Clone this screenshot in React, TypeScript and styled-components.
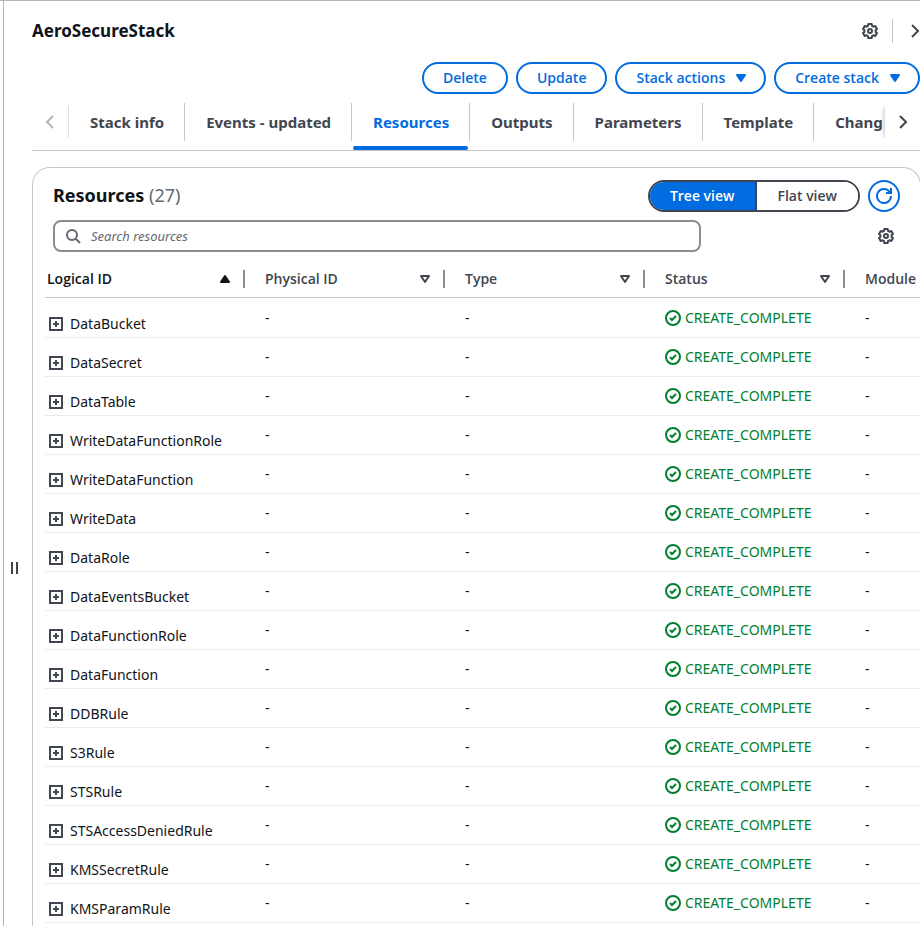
import React, { useState } from 'react';
import styled, { createGlobalStyle, css } from 'styled-components';

const blue = '#006ce0';
const ink = '#0f141a';
const slate = '#424650';
const line = '#c6c6cd';
const green = '#00802f';
const labelFont = '"Open Sans", "Noto Sans", sans-serif';

const GlobalStyle = createGlobalStyle`
  *, *::before, *::after { box-sizing: border-box; }
  body {
    margin: 0;
    background: #fff;
    color: ${ink};
    font: 400 14px/20px "Noto Sans", "Open Sans", sans-serif;
  }
  button, input { font: inherit; color: inherit; }
`;

const Page = styled.div`
  display: flex;
  height: 100vh;
  overflow: hidden;
  border-top: 1px solid #b4b4bb;
`;

const Gutter = styled.div`
  flex: 0 0 29px;
  margin-left: 3px;
  border-left: 1px solid #b4b4bb;
`;

const ResizeHandle = styled.button`
  display: flex;
  justify-content: center;
  align-items: center;
  width: 22px;
  height: 32px;
  margin-top: 551px;
  padding: 0;
  border: 0;
  background: none;
  color: ${slate};
  cursor: col-resize;
`;

const Main = styled.main`
  flex: 1 1 0;
  min-width: 0;
`;

const Icon = styled.svg`
  display: block;
  flex: none;
  width: 16px;
  height: 16px;
  fill: none;
  stroke: currentColor;
  stroke-width: 2;
`;

const IconButton = styled.button`
  display: flex;
  padding: 0;
  border: 0;
  background: none;
  color: ${slate};
  cursor: pointer;

  &:disabled { color: #b4b4bb; cursor: default; }
`;

const SortButton = styled(IconButton)`
  color: inherit;
`;

const TitleBar = styled.header`
  display: flex;
  align-items: center;
  height: 60px;
  margin-right: -3px;
`;

const Title = styled.h1`
  flex: 1;
  margin: 0;
  font-size: 17px;
  line-height: 24px;
  font-weight: 700;
`;

const TitleDivider = styled.span`
  width: 1px;
  height: 24px;
  margin: 0 14px;
  background: ${line};
`;

const Actions = styled.div`
  display: flex;
  justify-content: flex-end;
  gap: 8px;
  padding-top: 1px;
`;

const ActionButton = styled.button`
  display: flex;
  align-items: center;
  gap: 8px;
  height: 32px;
  padding: 0 19px;
  border: 2px solid ${blue};
  border-radius: 16px;
  background: #fff;
  color: ${blue};
  font-family: ${labelFont};
  font-weight: 600;
  cursor: pointer;

  svg { margin-right: -4px; }
`;

const TabBar = styled.div`
  display: flex;
  align-items: center;
  height: 57px;
  border-bottom: 1px solid ${line};
`;

const TabArrow = styled(IconButton)<{ $side: 'left' | 'right' }>`
  align-items: center;
  align-self: flex-start;
  flex: none;
  height: 32px;
  margin-top: 12px;
  ${p => p.$side === 'left'
    ? css`width: 37px; padding-left: 10px; border-right: 1px solid #dedee3;`
    : css`width: 36px; padding-left: 10px; border-left: 1px solid #dedee3; box-shadow: -4px 0 4px -4px rgba(15, 20, 26, 0.3);`}
`;

const TabList = styled.div`
  display: flex;
  flex: 1 1 0;
  height: 56px;
  min-width: 0;
  overflow: hidden;
`;

const Tab = styled.button<{ $active: boolean }>`
  flex: none;
  display: flex;
  flex-direction: column;
  justify-content: space-between;
  padding: 9px 0 0;
  border: 0;
  background: none;
  color: ${p => (p.$active ? blue : slate)};
  font-size: 15px;
  font-weight: 700;
  white-space: nowrap;
  cursor: pointer;

  &::after {
    content: '';
    align-self: stretch;
    height: 4px;
    margin: 0 2px 0 1px;
    border-radius: 2px;
    background: ${p => (p.$active ? blue : 'transparent')};
  }
`;

const TabText = styled.span`
  display: block;
  padding: 9px 20px 9px 21px;
  border-right: 1px solid ${line};
`;

const Card = styled.section`
  margin: 16px -1px 0 0;
  padding: 12px 0 0 12px;
  border: 1px solid ${line};
  border-radius: 18px 18px 0 0;
  border-bottom: 0;
  min-height: 100vh;
`;

const CardHeader = styled.div`
  display: flex;
  align-items: center;
  gap: 8px;
  padding: 0 20px 0 8px;
`;

const CardTitle = styled.h2`
  flex: 1;
  margin: 0;
  padding-bottom: 2px;
  font-size: 18px;
  line-height: 24px;
  font-weight: 700;
`;

const Count = styled.span`
  color: #656871;
  font-weight: 400;
`;

const Segments = styled.div`
  display: flex;
  height: 32px;
  border: 2px solid ${slate};
  border-radius: 16px;
  overflow: hidden;
`;

const Segment = styled.button<{ $on: boolean }>`
  padding: 0 21px 0 20px;
  border: 0;
  background: ${p => (p.$on ? blue : '#fff')};
  color: ${p => (p.$on ? '#fff' : slate)};
  font-family: ${labelFont};
  font-weight: 600;
  cursor: pointer;

  & + & { border-left: 2px solid ${slate}; }
`;

const RefreshButton = styled(IconButton)`
  justify-content: center;
  align-items: center;
  width: 32px;
  height: 32px;
  border: 2px solid ${blue};
  border-radius: 50%;
  color: ${blue};
`;

const Tools = styled.div`
  display: flex;
  align-items: center;
  justify-content: space-between;
  padding: 8px 26px 0 8px;
`;

const SearchBox = styled.label`
  display: flex;
  align-items: center;
  gap: 10px;
  flex: 0 1 648px;
  height: 32px;
  padding: 0 10px;
  border: 2px solid #8c8c94;
  border-radius: 8px;
  color: #656871;
`;

const SearchInput = styled.input`
  flex: 1;
  min-width: 0;
  padding: 0;
  border: 0;
  outline: 0;
  background: none;
  font-size: 13px;
  color: ${ink};

  &::placeholder { color: #656871; font-style: italic; opacity: 1; }
`;

const TableClip = styled.div`
  overflow: hidden;
`;

const Table = styled.table`
  table-layout: fixed;
  width: 1000px;
  border-collapse: separate;
  border-spacing: 0;
`;

const HeadCell = styled.th<{ $sorted: boolean }>`
  width: 200px;
  height: 46px;
  padding: 8px 0 0;
  border-bottom: 1px solid ${line};
  color: ${p => (p.$sorted ? ink : slate)};
  font-family: ${labelFont};
  font-weight: 600;
  text-align: left;
`;

const HeadInner = styled.div<{ $first: boolean }>`
  display: flex;
  align-items: center;
  justify-content: space-between;
  height: 18px;
  padding: 0 10px 0 ${p => (p.$first ? 2 : 20)}px;
  border-right: 2px solid #8c8c94;
`;

const Cell = styled.td`
  height: 39px;
  padding: 10px 0 8px 20px;
  border-bottom: 1px solid #ebebf0;
  vertical-align: top;

  tr:first-child > & { height: 40px; }
  tr:not(:first-child) > & { padding-top: 9px; }
`;

const NameCell = styled(Cell)`
  &&& { padding: 15px 0 3px 4px; }
  tr:first-child > &&& { padding-top: 16px; }
`;

const NameButton = styled.button`
  display: flex;
  align-items: center;
  gap: 7px;
  padding: 0;
  border: 0;
  background: none;
  cursor: pointer;

  svg { width: 14px; height: 14px; }
`;

const Status = styled.span`
  display: flex;
  align-items: center;
  gap: 4px;
  color: ${green};
`;

const ChevronLeft = () => <Icon viewBox="0 0 16 16"><path d="M11 2 5 8l6 6" /></Icon>;
const ChevronRight = () => <Icon viewBox="0 0 16 16"><path d="m5 2 6 6-6 6" /></Icon>;
const CaretDown = () => <Icon viewBox="0 0 16 16"><path d="M4 5h8l-4 6z" fill="currentColor" strokeLinejoin="round" /></Icon>;
const SortUp = () => <Icon viewBox="0 0 16 16"><path d="M4 11h8L8 5z" fill="currentColor" strokeLinejoin="round" /></Icon>;
const SortNone = () => <Icon viewBox="0 0 16 16"><path d="M4 5h8l-4 6z" strokeLinejoin="round" /></Icon>;
const Gear = () => (
  <Icon viewBox="0 0 16 16" strokeLinejoin="round">
    <path d="M13.6 8.9V7.1L15 6l-1.7-3-1.8.7-1.5-.9L9.7 1H6.3L6 2.8l-1.5.9L2.7 3 1 6l1.4 1.1v1.8L1 10l1.7 3 1.8-.7 1.5.9.3 1.8h3.4l.3-1.8 1.5-.9 1.8.7L15 10z" />
    <circle cx="8" cy="8" r="2" />
  </Icon>
);
const Refresh = () => <Icon viewBox="0 0 16 16"><path d="M15 8a7 7 0 1 1-1.8-4.7L15 5M15 0v5h-5" /></Icon>;
const Magnifier = () => <Icon viewBox="0 0 16 16"><circle cx="7" cy="7" r="5" /><path d="m15 15-4.5-4.5" /></Icon>;
const Check = () => <Icon viewBox="0 0 16 16"><circle cx="8" cy="8" r="7" /><path d="m5 8 2 2 4-4" /></Icon>;
const Plus = () => <Icon viewBox="0 0 14 14" color={slate}><path d="M1 1h12v12H1zM4 7h6M7 4v6" /></Icon>;

const tabs = ['Stack info', 'Events - updated', 'Resources', 'Outputs', 'Parameters', 'Template', 'Chang'];
const columns = ['Logical ID', 'Physical ID', 'Type', 'Status', 'Module'];
const resources = [
  'DataBucket', 'DataSecret', 'DataTable', 'WriteDataFunctionRole', 'WriteDataFunction', 'WriteData',
  'DataRole', 'DataEventsBucket', 'DataFunctionRole', 'DataFunction', 'DDBRule', 'S3Rule', 'STSRule',
  'STSAccessDeniedRule', 'KMSSecretRule', 'KMSParamRule',
];

export default function App() {
  const [tab, setTab] = useState('Resources');
  const [view, setView] = useState('Tree view');

  return (
    <Page>
      <GlobalStyle />
      <Gutter>
        <ResizeHandle aria-label="Resize panel">
          <Icon viewBox="0 0 16 16"><path d="M5 2v12M10 2v12" /></Icon>
        </ResizeHandle>
      </Gutter>
      <Main>
        <TitleBar>
          <Title>AeroSecureStack</Title>
          <IconButton aria-label="Stack preferences"><Gear /></IconButton>
          <TitleDivider />
          <IconButton aria-label="Close panel"><ChevronRight /></IconButton>
        </TitleBar>
        <Actions>
          <ActionButton>Delete</ActionButton>
          <ActionButton>Update</ActionButton>
          <ActionButton>Stack actions<CaretDown /></ActionButton>
          <ActionButton>Create stack<CaretDown /></ActionButton>
        </Actions>
        <TabBar>
          <TabArrow $side="left" aria-label="Scroll tabs left" disabled><ChevronLeft /></TabArrow>
          <TabList role="tablist">
            {tabs.map(name => (
              <Tab key={name} role="tab" aria-selected={tab === name} $active={tab === name} onClick={() => setTab(name)}>
                <TabText>{name}</TabText>
              </Tab>
            ))}
          </TabList>
          <TabArrow $side="right" aria-label="Scroll tabs right"><ChevronRight /></TabArrow>
        </TabBar>
        <Card>
          <CardHeader>
            <CardTitle>Resources <Count>(27)</Count></CardTitle>
            <Segments>
              {['Tree view', 'Flat view'].map(name => (
                <Segment key={name} $on={view === name} aria-pressed={view === name} onClick={() => setView(name)}>{name}</Segment>
              ))}
            </Segments>
            <RefreshButton aria-label="Refresh"><Refresh /></RefreshButton>
          </CardHeader>
          <Tools>
            <SearchBox>
              <Magnifier />
              <SearchInput type="search" placeholder="Search resources" aria-label="Search resources" />
            </SearchBox>
            <IconButton aria-label="Table preferences"><Gear /></IconButton>
          </Tools>
          <TableClip>
            <Table>
              <thead>
                <tr>
                  {columns.map((name, i) => (
                    <HeadCell key={name} scope="col" $sorted={i === 0}>
                      <HeadInner $first={i === 0}>
                        {name}
                        <SortButton aria-label={`Sort by ${name}`}>{i === 0 ? <SortUp /> : <SortNone />}</SortButton>
                      </HeadInner>
                    </HeadCell>
                  ))}
                </tr>
              </thead>
              <tbody>
                {resources.map(name => (
                  <tr key={name}>
                    <NameCell><NameButton><Plus />{name}</NameButton></NameCell>
                    <Cell>-</Cell>
                    <Cell>-</Cell>
                    <Cell><Status><Check />CREATE_COMPLETE</Status></Cell>
                    <Cell>-</Cell>
                  </tr>
                ))}
              </tbody>
            </Table>
          </TableClip>
        </Card>
      </Main>
    </Page>
  );
}
